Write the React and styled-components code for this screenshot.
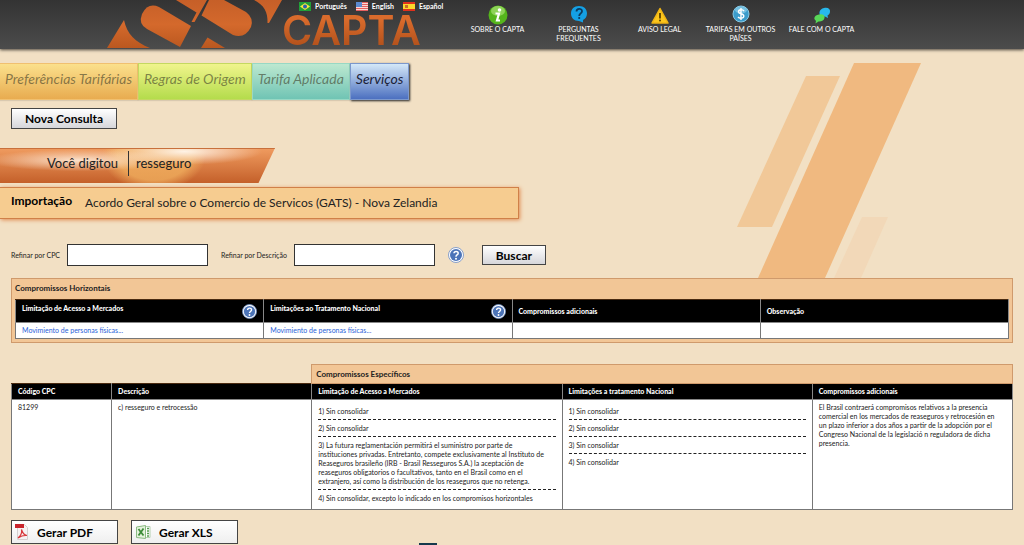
import styled, { createGlobalStyle } from "styled-components";

const GlobalStyle = createGlobalStyle`
  * {
    box-sizing: border-box;
  }

  body {
    margin: 0;
    background: #f2e0c4;
    color: #222;
    font-family: Lato, "Liberation Sans", sans-serif;
    font-size: 7px;
    line-height: 9px;
    overflow-x: hidden;
  }

  button,
  input {
    font-family: inherit;
  }
`;

const Page = styled.div`
  position: relative;
`;

const Header = styled.header`
  display: flex;
  height: 49px;
  padding-left: 105px;
  background: linear-gradient(#333, #4c4c4c);
  box-shadow: 0 1px 3px rgba(0, 0, 0, 0.7);
`;

const Brand = styled.div`
  width: 177px;
`;

const BrandColumn = styled.div`
  width: 175px;
`;

const Languages = styled.nav`
  display: flex;
  gap: 9px;
  padding-left: 17px;
`;

const Language = styled.a`
  display: flex;
  align-items: center;
  gap: 4px;
  height: 12px;
  color: #fff;
  font-size: 7px;
  font-weight: 700;
  text-decoration: none;
`;

const Wordmark = styled.div`
  font-family: Inter, sans-serif;
  font-size: 41px;
  font-weight: 600;
  line-height: 37px;
  color: transparent;
  background: linear-gradient(#d96b2c 20%, #b4521c 90%);
  background-clip: text;
`;

const HeaderNav = styled.nav`
  display: flex;
  padding-top: 5px;
`;

const HeaderLink = styled.a`
  display: flex;
  flex-direction: column;
  align-items: center;
  width: 81px;
  color: #fff;
  font-size: 7px;
  line-height: 9px;
  text-align: center;
  text-decoration: none;
  white-space: pre-line;
`;

const IconSlot = styled.span`
  display: flex;
  height: 20px;
`;

const Stripes = styled.svg`
  position: absolute;
  top: 63px;
  right: 103px;
  z-index: -1;
`;

const Tabs = styled.nav`
  display: flex;
  height: 37px;
  margin-top: 14px;
`;

const Tab = styled.a`
  padding: 0 5px;
  color: ${(props) => (props.$active ? "#1c2238" : "rgba(60, 60, 40, 0.6)")};
  background: linear-gradient(${(props) => props.$from}, ${(props) => props.$to});
  border: 1px solid ${(props) => props.$line};
  font-size: 14px;
  font-style: italic;
  line-height: 30px;
  text-decoration: none;
  box-shadow: ${(props) => (props.$active ? "1px 1px 2px #222" : "0 1px 1px rgba(0, 0, 0, 0.1)")};

  &:first-child {
    border-left: 0;
  }
`;

const Button = styled.button`
  display: flex;
  align-items: center;
  justify-content: ${(props) => (props.$icon ? "flex-start" : "center")};
  gap: 8px;
  width: ${(props) => props.$width}px;
  height: ${(props) => props.$height}px;
  padding: ${(props) => (props.$icon ? "0 3px" : "0")};
  color: #000;
  background: linear-gradient(#fff, ${(props) => (props.$icon ? "#efefef" : "#d6d6da")});
  border: 1px solid #444;
  font-size: 12px;
  font-weight: 700;
  cursor: pointer;
`;

const Toolbar = styled.div`
  padding: 8px 11px 19px;
`;

const Query = styled.div`
  display: flex;
  align-items: center;
  width: 275px;
  height: 35px;
  padding: 0 0 4px 47px;
  font-size: 13px;
  line-height: 25px;
  color: #222;
  background:
    linear-gradient(#c8703c, #c8703c) top / 100% 1px no-repeat,
    radial-gradient(ellipse at 67% 10%, rgba(255, 246, 236, 0.95), rgba(255, 240, 224, 0) 30%),
    radial-gradient(ellipse at 29% 35%, rgba(255, 236, 218, 0.9), rgba(255, 232, 210, 0) 34%),
    radial-gradient(ellipse 52px 36px at 56% 20%, rgba(242, 178, 96, 0.75) 70%, transparent),
    linear-gradient(#f09c60, #c4602a);
  clip-path: polygon(0 0, 100% 0, 94% 100%, 0 100%);
`;

const QueryTerm = styled.span`
  margin-left: 10px;
  padding-left: 7px;
  border-left: 1px solid #333;
`;

const Agreement = styled.div`
  display: flex;
  gap: 13px;
  width: 519px;
  height: 32px;
  margin-top: 4px;
  padding-left: 11px;
  color: #222;
  background: #f6cc90;
  border: 1px solid #d08048;
  border-left: 0;
  box-shadow: 1px 1px 4px #e08a50;
  font-size: 12px;
  line-height: 30px;
`;

const AgreementKind = styled.strong`
  color: #000;
  line-height: 26px;
`;

const Filters = styled.form`
  display: flex;
  align-items: center;
  margin-top: 25px;
  padding: 0 11px;
`;

const Field = styled.label`
  display: flex;
  align-items: center;
  gap: 7px;
  margin-right: 13px;
`;

const Input = styled.input`
  width: 141px;
  height: 22px;
  padding: 0 4px;
  background: #fff;
  border: 1px solid #333;
  font-size: 11px;
`;

const Help = styled.button`
  display: flex;
  padding: 0;
  background: none;
  border: 0;
  cursor: pointer;
`;

const SearchSlot = styled.div`
  margin-left: 18px;
`;

const Panel = styled.section`
  margin: 12px 11px 0;
  padding: 0 3px 3px;
  background: #f2c696;
  border: 1px solid #cf9a6c;
`;

const PanelTitle = styled.h2`
  margin: 0;
  padding-bottom: 2px;
  color: #222;
  font-size: 8px;
  font-weight: 700;
  line-height: 18px;
`;

const Table = styled.table`
  width: 100%;
  border-collapse: collapse;
  table-layout: fixed;
`;

const HeadCell = styled.th`
  height: ${(props) => props.$height}px;
  padding: 0 6px;
  color: #fff;
  background: #000;
  border: 1px solid #888;
  border-top-color: #4a2a10;
  font-size: 7px;
  font-weight: 900;
  text-align: left;
`;

const HeadContent = styled.div`
  display: flex;
  align-items: flex-start;
  justify-content: space-between;
`;

const Cell = styled.td`
  height: ${(props) => props.$height}px;
  padding: ${(props) => (props.$compact ? "0 6px" : "3px 6px")};
  background: #fff;
  border: 1px solid #777;
  vertical-align: ${(props) => (props.$compact ? "middle" : "top")};
`;

const CellLink = styled.a`
  color: #2a62d8;
  text-decoration: none;
`;

const Specific = styled.section`
  margin: 21px 11px 0;
`;

const GroupCell = styled.th`
  height: 19px;
  padding: 0 4px;
  color: #222;
  background: #f2c696;
  border: 1px solid #cf9a6c;
  font-size: 8px;
  font-weight: 700;
  text-align: left;
`;

const Commitments = styled.ol`
  margin: 0;
  padding: 0;
  list-style: none;
`;

const Commitment = styled.li`
  padding: 4px 8px 3px 0;

  & + & {
    border-top: 1px dashed #222;
  }
`;

const Note = styled.p`
  margin: 0;
  padding-right: 8px;
`;

const Exports = styled.div`
  display: flex;
  gap: 13px;
  padding: 10px 11px 0;
`;

const Footer = styled.footer`
  width: 18px;
  height: 2px;
  margin: -1px auto 0 419px;
  background: #16394c;
`;

function LogoMark() {
  return (
    <svg width="180" height="49" viewBox="105 0 180 49" aria-hidden="true">
      <defs>
        <linearGradient id="copper" x1="0" y1="0" x2="0" y2="49" gradientUnits="userSpaceOnUse">
          <stop offset="0" stopColor="#c65f28" />
          <stop offset="0.5" stopColor="#d4692c" />
          <stop offset="1" stopColor="#b9571f" />
        </linearGradient>
      </defs>
      <g fill="url(#copper)">
        <path d="M107 48L124 20C127 34 135 42 150 48Z" />
        <path d="M159 7L191 26L180 47L147 29Q138 24 142 14Q148 2 159 7Z" />
        <path d="M176 0H207L194.500 22H191.500L196.500 12.500Z" />
        <path d="M209 0H224L246 12Q254 18 251 27Q245 39 233 35L201.500 15.500Z" />
        <path d="M207.500 37.500L225 48H201Z" />
        <path d="M254 0H282L269 23H267.500C268 12 264 5 254 0Z" />
      </g>
    </svg>
  );
}

function BrazilFlag() {
  return (
    <svg width="12" height="9" viewBox="0 0 12 9" aria-hidden="true">
      <rect width="12" height="9" fill="#21a038" />
      <path d="M1 4.500L6 1L11 4.500L6 8Z" fill="#f5e642" />
      <circle cx="6" cy="4.500" r="2" fill="#2a5fb0" />
    </svg>
  );
}

function UsaFlag() {
  return (
    <svg width="12" height="9" viewBox="0 0 12 9" aria-hidden="true">
      <rect width="12" height="9" fill="#fbd8d4" />
      <path d="M0 .5H12M0 2.500H12M0 4.500H12M0 6.500H12M0 8.500H12" stroke="#e46060" />
      <rect width="6" height="5" fill="#5a8ad0" />
    </svg>
  );
}

function SpainFlag() {
  return (
    <svg width="12" height="9" viewBox="0 0 12 9" aria-hidden="true">
      <rect width="12" height="9" fill="#e0301c" />
      <rect y="2" width="12" height="5" fill="#fbd62c" />
      <rect x="2" y="3" width="3" height="3" fill="#c86a28" />
    </svg>
  );
}

function InfoIcon() {
  return (
    <svg width="20" height="20" viewBox="0 0 20 20" aria-hidden="true">
      <circle cx="10" cy="10" r="9.500" fill="#55b51c" />
      <ellipse cx="10" cy="6" rx="7" ry="5" fill="#a5e070" opacity="0.7" />
      <circle cx="11.500" cy="5" r="1.800" fill="#fff" />
      <path d="M7.500 8.500H11L9 15.500H12" fill="none" stroke="#fff" strokeWidth="2.200" />
    </svg>
  );
}

function QuestionIcon() {
  return (
    <svg width="18" height="18" viewBox="0 0 18 18" aria-hidden="true">
      <path d="M9 1C14 1 17 4 17 8.500C17 12 15 14 13 15V17.500L9 16C4 16 1 13 1 8.500S4 1 9 1Z" fill="#14a0e4" />
      <path d="M6.500 6.500C6.500 3 12 3 12 6.200C12 8.500 9.200 8.300 9.200 11" fill="none" stroke="#0c3c60" strokeWidth="1.800" />
      <circle cx="9.200" cy="13" r="1.100" fill="#0c3c60" />
    </svg>
  );
}

function WarningIcon() {
  return (
    <svg width="20" height="20" viewBox="0 0 20 20" aria-hidden="true">
      <path d="M10 3.500L18 18H2Z" fill="#fcc61c" stroke="#f0b414" strokeWidth="1.500" strokeLinejoin="round" />
      <path d="M10 8V13.500" stroke="#5a4000" strokeWidth="1.800" />
      <circle cx="10" cy="15.500" r="1" fill="#5a4000" />
    </svg>
  );
}

function DollarIcon() {
  return (
    <svg width="18" height="18" viewBox="0 0 18 18" aria-hidden="true">
      <circle cx="9" cy="9" r="8" fill="#3b9ccb" stroke="#88c8e4" />
      <ellipse cx="9" cy="5" rx="6" ry="3.500" fill="#9cd8f0" opacity="0.6" />
      <path d="M12 6C10.500 4 6.500 4.300 6.500 6.700C6.500 9.500 11.800 8 11.800 11C11.800 13.600 7.500 13.800 6 12M9 3V15" fill="none" stroke="#fff" strokeWidth="1.400" />
    </svg>
  );
}

function ChatIcon() {
  return (
    <svg width="18" height="20" viewBox="0 0 18 20" aria-hidden="true">
      <path d="M11 3C15 2 17.500 4 17 7C16.800 9 15.500 10 14.500 10.500L15 13L12 11.500C8 12 6 10 6.500 7C7 5 8.500 3.500 11 3Z" fill="#28b8ec" />
      <path d="M6 9.500C10 8.500 12 10.500 11.500 13C11 15.500 8.500 16.800 5.500 16.500L2.500 18.500L3 15.800C-.500 13.500 2 10 6 9.500Z" fill="#58d858" />
    </svg>
  );
}

function HelpIcon({ size = 15 }) {
  return (
    <svg width={size} height={size} viewBox="0 0 16 16" aria-hidden="true">
      <circle cx="8" cy="8" r="7.500" fill="#fff" stroke="#6b8cc4" strokeWidth="0.800" />
      <circle cx="8" cy="8" r="6" fill="#4c74b8" />
      <path d="M6 6.300C6 3.700 10.200 3.800 10.200 6.200C10.200 8 8 7.900 8 9.700" fill="none" stroke="#fff" strokeWidth="1.500" />
      <circle cx="8" cy="11.700" r="1" fill="#fff" />
    </svg>
  );
}

function PdfIcon() {
  return (
    <svg width="14" height="18" viewBox="0 0 14 18" aria-hidden="true">
      <path d="M2.500 1.500H9.500L12.500 4.500V16.500H2.500Z" fill="#f6f2f2" stroke="#d4d0d0" />
      <rect width="9" height="4" y="1" fill="#c8242c" />
      <path d="M6.500 6.500C7.500 10 9 12 12 12.500C8 12 6 13 3 15C5.500 13 7.200 10 6.500 6.500Z" fill="none" stroke="#d8383c" strokeWidth="1.200" />
    </svg>
  );
}

function XlsIcon() {
  return (
    <svg width="16" height="16" viewBox="0 0 16 16" aria-hidden="true">
      <path d="M4 2.500H15V13.500H4Z" fill="#fff" stroke="#b4d0b0" />
      <path d="M12 4.500H14M12 7H14M12 9.500H14M12 12H14" stroke="#58a050" strokeWidth="1.500" />
      <path d="M1.500 3L10.500 1.500V14.500L1.500 13.500Z" fill="#e4f2dc" stroke="#8cbc84" />
      <path d="M3.500 5L8.500 11.500M8.500 4.500L3.500 11.500" stroke="#3c8c38" strokeWidth="1.800" />
    </svg>
  );
}

const languages = [
  { label: "Português", Flag: BrazilFlag },
  { label: "English", Flag: UsaFlag },
  { label: "Español", Flag: SpainFlag },
];

const headerLinks = [
  { label: "SOBRE O CAPTA", Icon: InfoIcon },
  { label: "PERGUNTAS\nFREQUENTES", Icon: QuestionIcon },
  { label: "AVISO LEGAL", Icon: WarningIcon },
  { label: "TARIFAS EM OUTROS\nPAÍSES", Icon: DollarIcon },
  { label: "FALE COM O CAPTA", Icon: ChatIcon },
];

const tabs = [
  { label: "Preferências Tarifárias", from: "#fbe08c", to: "#e8ac50", line: "#f0c070" },
  { label: "Regras de Origem", from: "#f0f48c", to: "#b4dc4c", line: "#c4d860" },
  { label: "Tarifa Aplicada", from: "#bce8d0", to: "#70c4b4", line: "#98d8c4" },
  { label: "Serviços", from: "#d4e8f8", to: "#4c70c0", line: "#7c98cc", active: true },
];

const marketAccess = [
  "1) Sin consolidar",
  "2) Sin consolidar",
  "3) La futura reglamentación permitirá el suministro por parte de instituciones privadas. Entretanto, compete exclusivamente al Instituto de Reaseguros brasileño (IRB - Brasil Resseguros S.A.) la aceptación de reaseguros obligatorios o facultativos, tanto en el Brasil como en el extranjero, así como la distribución de los reaseguros que no retenga.",
  "4) Sin consolidar, excepto lo indicado en los compromisos horizontales",
];

const nationalTreatment = [
  "1) Sin consolidar",
  "2) Sin consolidar",
  "3) Sin consolidar",
  "4) Sin consolidar",
];

function CommitmentList({ items }) {
  return (
    <Commitments>
      {items.map((item) => (
        <Commitment key={item}>{item}</Commitment>
      ))}
    </Commitments>
  );
}

function HelpHead({ children }) {
  return (
    <HeadCell $height={23}>
      <HeadContent>
        {children}
        <Help type="button" aria-label="Ajuda">
          <HelpIcon />
        </Help>
      </HeadContent>
    </HeadCell>
  );
}

export default function App() {
  return (
    <Page>
      <GlobalStyle />
      <Stripes width="184" height="215" viewBox="0 0 184 215" aria-hidden="true">
        <path d="M69 13H103L35 164H0Z" fill="#f1c898" />
        <path d="M117 0H184L88 215H21Z" fill="#f0b980" />
        <path d="M125 154H151L124 215H97Z" fill="#f2d8b8" />
      </Stripes>

      <Header>
        <Brand>
          <LogoMark />
        </Brand>
        <BrandColumn>
          <Languages>
            {languages.map(({ label, Flag }) => (
              <Language key={label} href="#">
                <Flag />
                {label}
              </Language>
            ))}
          </Languages>
          <Wordmark>CAPTA</Wordmark>
        </BrandColumn>
        <HeaderNav>
          {headerLinks.map(({ label, Icon }) => (
            <HeaderLink key={label} href="#">
              <IconSlot>
                <Icon />
              </IconSlot>
              {label}
            </HeaderLink>
          ))}
        </HeaderNav>
      </Header>

      <Tabs>
        {tabs.map((tab) => (
          <Tab
            key={tab.label}
            href="#"
            $from={tab.from}
            $to={tab.to}
            $line={tab.line}
            $active={tab.active}
          >
            {tab.label}
          </Tab>
        ))}
      </Tabs>

      <Toolbar>
        <Button type="button" $width={106} $height={21}>
          Nova Consulta
        </Button>
      </Toolbar>

      <Query>
        Você digitou
        <QueryTerm>resseguro</QueryTerm>
      </Query>

      <Agreement>
        <AgreementKind>Importação</AgreementKind>
        Acordo Geral sobre o Comercio de Servicos (GATS) - Nova Zelandia
      </Agreement>

      <Filters>
        <Field>
          Refinar por CPC
          <Input type="text" />
        </Field>
        <Field>
          Refinar por Descrição
          <Input type="text" />
        </Field>
        <Help type="button" aria-label="Ajuda">
          <HelpIcon size={16} />
        </Help>
        <SearchSlot>
          <Button type="submit" $width={64} $height={20}>
            Buscar
          </Button>
        </SearchSlot>
      </Filters>

      <Panel>
        <PanelTitle>Compromissos Horizontais</PanelTitle>
        <Table>
          <thead>
            <tr>
              <HelpHead>Limitação de Acesso a Mercados</HelpHead>
              <HelpHead>Limitações ao Tratamento Nacional</HelpHead>
              <HeadCell $height={23}>Compromissos adicionais</HeadCell>
              <HeadCell $height={23}>Observação</HeadCell>
            </tr>
          </thead>
          <tbody>
            <tr>
              <Cell $height={16} $compact>
                <CellLink href="#">Movimiento de personas físicas...</CellLink>
              </Cell>
              <Cell $height={16} $compact>
                <CellLink href="#">Movimiento de personas físicas...</CellLink>
              </Cell>
              <Cell $compact />
              <Cell $compact />
            </tr>
          </tbody>
        </Table>
      </Panel>

      <Specific>
        <Table>
          <colgroup>
            <col width="10%" />
            <col width="20%" />
            <col width="25%" />
            <col width="25%" />
            <col width="20%" />
          </colgroup>
          <thead>
            <tr>
              <td colSpan={2} />
              <GroupCell colSpan={3}>Compromissos Específicos</GroupCell>
            </tr>
            <tr>
              <HeadCell $height={16}>Código CPC</HeadCell>
              <HeadCell $height={16}>Descrição</HeadCell>
              <HeadCell $height={16}>Limitação de Acesso a Mercados</HeadCell>
              <HeadCell $height={16}>Limitações a tratamento Nacional</HeadCell>
              <HeadCell $height={16}>Compromissos adicionais</HeadCell>
            </tr>
          </thead>
          <tbody>
            <tr>
              <Cell $height={110}>81299</Cell>
              <Cell>c) resseguro e retrocessão</Cell>
              <Cell>
                <CommitmentList items={marketAccess} />
              </Cell>
              <Cell>
                <CommitmentList items={nationalTreatment} />
              </Cell>
              <Cell>
                <Note>
                  El Brasil contraerá compromisos relativos a la presencia comercial en los mercados
                  de reaseguros y retrocesión en un plazo inferior a dos años a partir de la adopción
                  por el Congreso Nacional de la legislació n reguladora de dicha presencia.
                </Note>
              </Cell>
            </tr>
          </tbody>
        </Table>
      </Specific>

      <Exports>
        <Button type="button" $icon $width={107} $height={24}>
          <PdfIcon />
          Gerar PDF
        </Button>
        <Button type="button" $icon $width={107} $height={24}>
          <XlsIcon />
          Gerar XLS
        </Button>
      </Exports>
      <Footer />
    </Page>
  );
}
